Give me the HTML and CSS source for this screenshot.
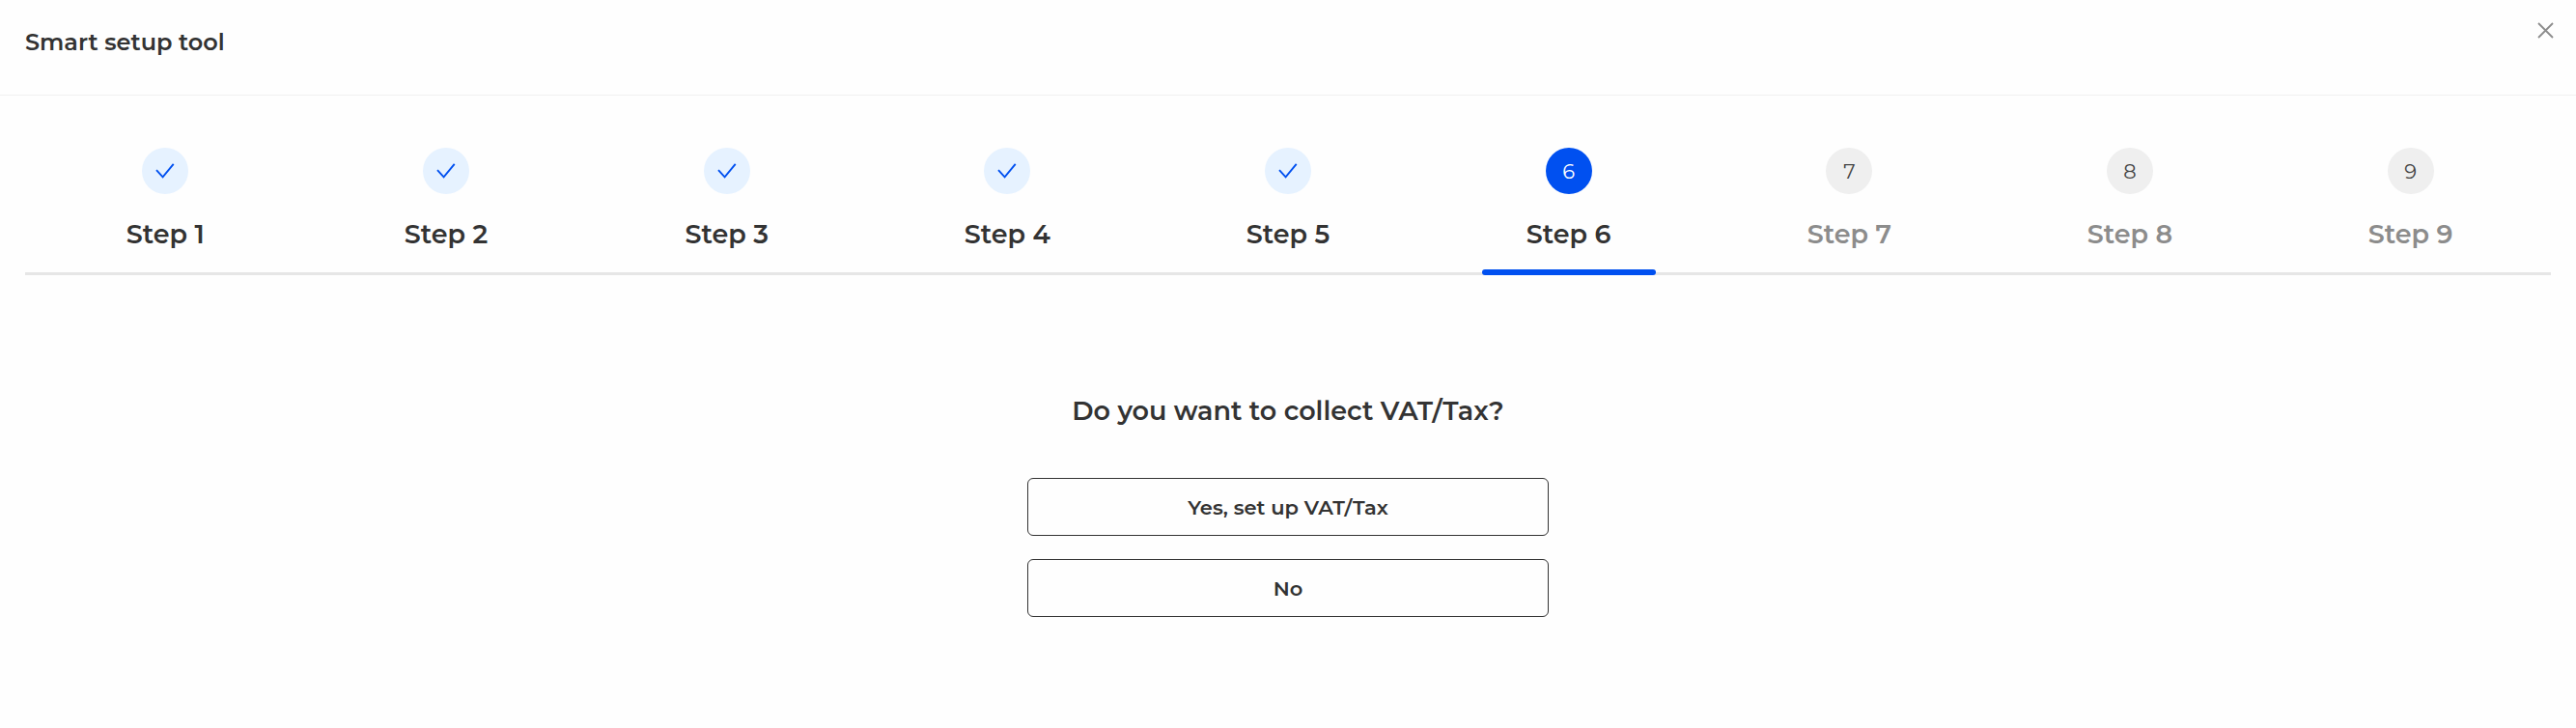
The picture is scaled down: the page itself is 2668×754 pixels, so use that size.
FILE: index.html
```html
<!DOCTYPE html>
<html lang="en">
<head>
<meta charset="utf-8">
<title>Smart setup tool</title>
<link rel="stylesheet" href="styles.css">
</head>
<body>
<svg class="defs" aria-hidden="true"><symbol id="check" viewBox="0 0 20 16"><path d="M1 7.2 L7.6 14.3 L18.7 .8" fill="none" stroke="currentColor" stroke-width="1.9"/></symbol></svg>
<header class="header">
  <h1 class="title">Smart setup tool</h1>
  <button class="close" aria-label="Close"><svg width="17" height="17" viewBox="0 0 17 17"><path d="M1 1 L16 16 M16 1 L1 16" stroke="currentColor" stroke-width="1.8"/></svg></button>
</header>
<ol class="steps">
  <li class="step done"><span class="badge"><svg class="check"><use href="#check"/></svg></span><span class="label">Step 1</span></li>
  <li class="step done"><span class="badge"><svg class="check"><use href="#check"/></svg></span><span class="label">Step 2</span></li>
  <li class="step done"><span class="badge"><svg class="check"><use href="#check"/></svg></span><span class="label">Step 3</span></li>
  <li class="step done"><span class="badge"><svg class="check"><use href="#check"/></svg></span><span class="label">Step 4</span></li>
  <li class="step done"><span class="badge"><svg class="check"><use href="#check"/></svg></span><span class="label">Step 5</span></li>
  <li class="step active"><span class="badge">6</span><span class="label">Step 6</span></li>
  <li class="step todo"><span class="badge">7</span><span class="label">Step 7</span></li>
  <li class="step todo"><span class="badge">8</span><span class="label">Step 8</span></li>
  <li class="step todo"><span class="badge">9</span><span class="label">Step 9</span></li>
</ol>
<main class="content">
  <h2 class="question">Do you want to collect VAT/Tax?</h2>
  <div class="choices">
    <button class="choice">Yes, set up VAT/Tax</button>
    <button class="choice">No</button>
  </div>
</main>
</body>
</html>
```
FILE: styles.css
```css
* { box-sizing: border-box; }
body {
  margin: 0;
  height: 754px;
  background: #fefefe;
  color: #333;
  font-family: Montserrat, Inter, sans-serif;
  overflow: hidden;
}
button { font-family: inherit; color: inherit; cursor: pointer; }
.defs { display: none; }
.header {
  display: flex;
  justify-content: space-between;
  align-items: flex-start;
  height: 99px;
  padding: 23px 23px 0 26px;
  border-bottom: 1px solid #f0f0f0;
}
.title {
  margin: 5px 0 0;
  font-size: 24px;
  font-weight: 600;
  line-height: 31px;
}
.close { display: block; padding: 0; border: 0; background: none; color: #8c8c8c; line-height: 0; }
.steps {
  display: grid;
  grid-template-columns: repeat(9, 1fr);
  list-style: none;
  height: 186px;
  margin: 0 26px;
  padding: 54px 0 0;
  border-bottom: 3px solid #e6e6e6;
}
.step { position: relative; display: flex; flex-direction: column; align-items: center; }
.badge {
  display: flex;
  align-items: center;
  justify-content: center;
  width: 48px;
  height: 48px;
  border-radius: 50%;
  font-size: 21px;
  font-weight: 400;
}
.check { width: 20px; height: 16px; margin-top: -1px; }
.label {
  margin-top: 24px;
  font-size: 27px;
  font-weight: 600;
  line-height: 36px;
}
.done .badge { background: #e6f2ff; color: #0050f0; }
.active .badge { background: #0050f0; color: #fff; }
.active::after {
  content: "";
  position: absolute;
  bottom: -3px;
  width: 180px;
  height: 6px;
  border-radius: 3px;
  background: #0050f0;
}
.todo .badge { background: #efefef; color: #444; }
.todo .label { color: #8c8c8c; }
.content { display: flex; flex-direction: column; align-items: center; padding-top: 123px; }
.question {
  margin: 0;
  font-size: 27px;
  font-weight: 600;
  line-height: 36px;
}
.choices { display: grid; gap: 24px; width: 540px; margin-top: 51px; }
.choice {
  height: 60px;
  padding: 0;
  border: 1px solid #333;
  border-radius: 6px;
  background: #fefefe;
  font-size: 21px;
  font-weight: 600;
}
```
